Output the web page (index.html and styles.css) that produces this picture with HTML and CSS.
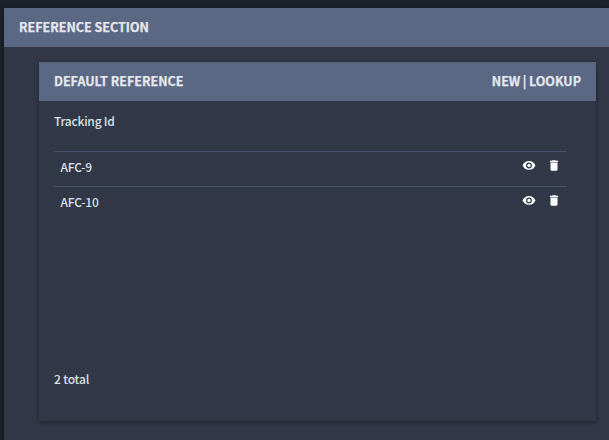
FILE: index.html
```html
<!DOCTYPE html>
<html lang="en">
<head>
<meta charset="utf-8">
<title>Reference Section</title>
<link rel="stylesheet" href="styles.css">
</head>
<body>
<svg class="symbols" aria-hidden="true">
  <symbol id="eye" viewBox="0 -.8 24 24"><path d="M12 4.500C7 4.500 2.730 7.610 1 12c1.730 4.390 6 7.500 11 7.500s9.270-3.110 11-7.500C21.270 7.610 17 4.500 12 4.500zM12 17a5 5 0 1 1 0-10 5 5 0 0 1 0 10zm0-8a3 3 0 1 0 0 6 3 3 0 0 0 0-6z"/></symbol>
  <symbol id="trash" viewBox="0 -.8 24 24"><path d="M6 19c0 1.100.9 2 2 2h8c1.100 0 2-.9 2-2V7H6v12zM19 4h-3.500l-1-1h-5l-1 1H5v2h14V4z"/></symbol>
</svg>
<section class="section">
  <header class="bar"><h1 class="section-title">REFERENCE SECTION</h1></header>
  <article class="card">
    <header class="bar">
      <h2 class="card-title">DEFAULT REFERENCE</h2>
      <nav class="links"><a>NEW</a><span>|</span><a>LOOKUP</a></nav>
    </header>
    <div class="content">
      <div class="column-head"><span>Tracking Id</span></div>
      <div class="row"><span>AFC-9</span><div class="actions"><svg><use href="#eye"/></svg><svg><use href="#trash"/></svg></div></div>
      <div class="row"><span>AFC-10</span><div class="actions"><svg><use href="#eye"/></svg><svg><use href="#trash"/></svg></div></div>
      <footer class="total">2 total</footer>
    </div>
  </article>
</section>
</body>
</html>
```

FILE: styles.css
```css
* { box-sizing: border-box; }
body {
  margin: 0;
  height: 440px;
  overflow: hidden;
  padding: 8px 0 0 4px;
  background: #1d2129;
  color: #dce0e7;
  font: 500 12px/20px "Noto Sans CJK SC", "Open Sans", sans-serif;
  letter-spacing: -.23px;
}
.symbols { display: none; }
.section {
  height: 450px;
  background: #323847;
  box-shadow: 0 1px 4px rgba(0, 0, 0, .45);
}
.bar {
  display: flex;
  justify-content: space-between;
  align-items: center;
  height: 39px;
  padding: 0 15px;
  background: #5b6883;
  color: #e5e8ef;
}
.section-title, .card-title, .links {
  margin: 0;
  font-size: 12.500px;
  font-weight: 700;
  line-height: 20px;
  letter-spacing: 0;
  white-space: nowrap;
  -webkit-text-stroke: .25px currentColor;
}
.bar > * { margin-top: -1px; }
.links { display: flex; gap: 2.5px; }
.card {
  height: 359px;
  margin: 15px 13px 0 35px;
  background: #323847;
  box-shadow: 0 1px 4px rgba(0, 0, 0, .45);
}
.content {
  display: flex;
  flex-direction: column;
  height: 320px;
  padding: 0 29px 32px 15px;
}
.column-head { height: 50px; padding-top: 10px; }
.row {
  display: flex;
  justify-content: space-between;
  height: 35px;
  padding: 5px 6px 0 6.5px;
  border-top: 1px solid #46536b;
}
.actions { display: flex; gap: 11px; padding-top: 1px; }
.actions svg {
  width: 14px;
  height: 14px;
  fill: #fff;
}
.total { margin-top: auto; letter-spacing: -.15px; }
```
